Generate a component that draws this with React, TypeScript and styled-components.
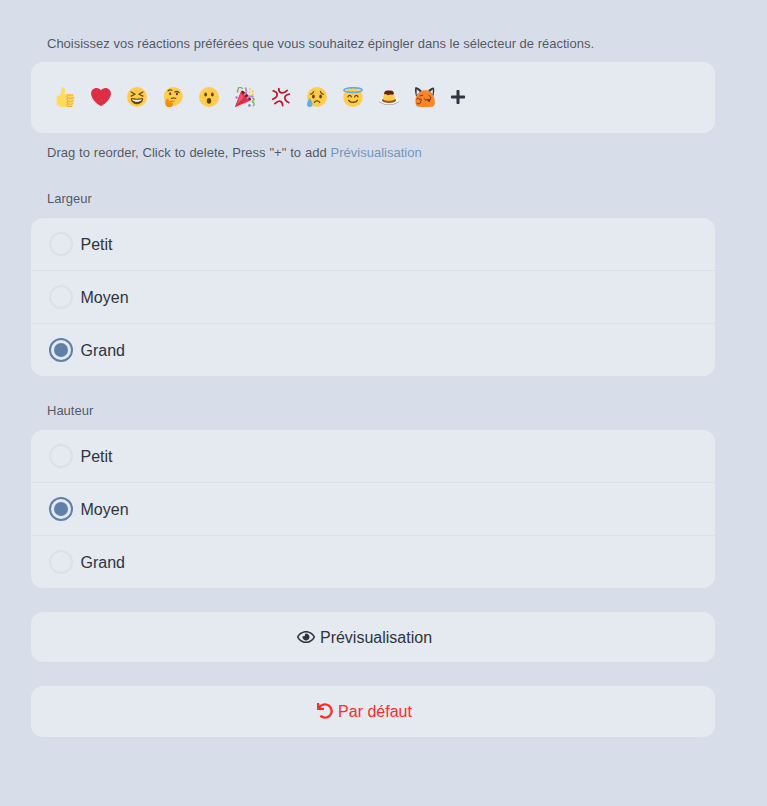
import React from "react";
import styled, { createGlobalStyle } from "styled-components";
import { FaPlus, FaRegEye, FaUndo } from "react-icons/fa";

const GlobalStyle = createGlobalStyle`
  * { box-sizing: border-box; }
  html, body { margin: 0; background: #d8dee9; }
  body {
    color: #2e3440;
    font-family: "Liberation Sans", Arial, sans-serif;
    font-size: 16px;
    line-height: 22px;
  }
`;

const Page = styled.main`
  display: flex;
  flex-direction: column;
  gap: 24px;
  width: 767px;
  min-height: 806px;
  padding: 34px 52px 0 31px;
`;

const Section = styled.section`
  display: flex;
  flex-direction: column;
`;

const Caption = styled.div`
  height: 28px;
  padding: 1px 16px 0;
  font-size: 13px;
  line-height: 18px;
  white-space: nowrap;
  color: rgba(46, 52, 64, 0.8);
`;

const Hint = styled(Caption)`
  height: 31px;
  padding-top: 11px;
  word-spacing: 0.3px;
`;

const GroupTitle = styled(Caption)`
  height: 30px;
  padding-top: 2px;
`;

const Link = styled.a`
  color: #7595bd;
  text-decoration: none;
`;

const Panel = styled.div`
  background: #e5e9f0;
  border-radius: 12px;
  overflow: hidden;
`;

const ReactionPanel = styled(Panel)`
  display: flex;
  align-items: center;
  gap: 16px;
  height: 71px;
  padding: 0 24px 1px;
`;

const Emoji = styled.svg`
  display: block;
  width: 20px;
  height: 20px;
  flex: none;
`;

const AddButton = styled.button`
  display: flex;
  margin-left: -1px;
  padding: 0;
  border: 0;
  background: none;
  color: #2e3440;
  font-size: 16px;
`;

const Option = styled.label`
  display: flex;
  align-items: center;
  gap: 7.5px;
  height: 53px;
  padding: 0 18px;
  border-bottom: 1px solid #dbe0e8;
  &:last-child {
    height: 52px;
    border-bottom: 0;
  }
`;

const Label = styled.span`
  padding-top: 2px;
`;

const Ring = styled.span<{ $on: boolean }>`
  display: grid;
  place-items: center;
  width: 24px;
  height: 24px;
  border: 2px solid ${(p) => (p.$on ? "#5e81ac" : "#dce1e6")};
  border-radius: 50%;
  &::after {
    content: "";
    width: 14px;
    height: 14px;
    border-radius: 50%;
    background: ${(p) => (p.$on ? "#5e81ac" : "transparent")};
  }
`;

const Action = styled.button<{ $danger?: boolean }>`
  display: flex;
  align-items: center;
  justify-content: center;
  gap: 5px;
  height: ${(p) => (p.$danger ? 51 : 50)}px;
  padding: 0 17px 0 0;
  border: 0;
  border-radius: 12px;
  background: #e5e9f0;
  color: ${(p) => (p.$danger ? "#ff2a2a" : "#2e3440")};
  font: inherit;
`;

const EyeIcon = styled(FaRegEye)`
  width: 18px;
  height: 16px;
`;

const UndoIcon = styled(FaUndo)`
  margin-bottom: 2px;
`;

const Face = () => <circle cx="18" cy="18" r="18" fill="#ffcc4d" />;

const ThumbsUp = () => (
  <Emoji viewBox="0 0 36 36">
    <path fill="#ffdb5e" d="M34.956 17.916c0-.503-.12-.975-.321-1.404-1.341-4.326-7.619-4.01-16.549-4.221-1.493-.035-.639-1.798-.115-5.668.341-2.517-1.282-6.382-4.01-6.382-4.498 0-.171 3.548-4.148 12.322-2.125 4.688-6.875 2.062-6.875 6.771v10.719c0 1.833.18 3.595 2.758 3.885C8.195 34.219 7.633 36 11.238 36h18.044c1.838 0 3.333-1.496 3.333-3.334 0-.762-.267-1.456-.698-2.018 1.02-.571 1.72-1.649 1.72-2.899 0-.76-.266-1.454-.696-2.015 1.023-.57 1.725-1.649 1.725-2.901 0-.909-.368-1.733-.961-2.336.757-.611 1.251-1.535 1.251-2.581z" />
    <path fill="none" stroke="#ee9547" strokeWidth="1.5" strokeLinecap="round" d="M34 19.500c-4 1.500-9 1-11 0-3-1-2-5 1-5h8M33 25c-3 1.500-8 1-10 0-2-1-2.500-4 0-5M32 30c-3 1.500-7 1-9 0-2-1-2-4 0-5M30 35c-3 .5-6 .3-8-1-1-1-1-3 1-4" />
  </Emoji>
);

const Heart = () => (
  <Emoji viewBox="0 0 36 36">
    <path fill="#dd2e44" d="M35.885 11.833c0-5.45-4.418-9.868-9.867-9.868-3.308 0-6.227 1.633-8.018 4.129-1.791-2.496-4.71-4.129-8.017-4.129-5.45 0-9.868 4.417-9.868 9.868 0 .772.098 1.52.266 2.241C1.751 22.587 11.216 31.568 18 34.034c6.783-2.466 16.249-11.447 17.617-19.959.17-.721.268-1.469.268-2.242z" />
  </Emoji>
);

const Laughing = () => (
  <Emoji viewBox="0 0 36 36">
    <Face />
    <path fill="#664500" d="M18 21c-3.623 0-6.027-.422-9-1-.679-.131-2 0-2 2 0 4 4.595 9 11 9 6.404 0 11-5 11-9 0-2-1.321-2.132-2-2-2.973.578-5.377 1-9 1z" />
    <path fill="#fff" d="M9 22s3 1 9 1 9-1 9-1-1 4.500-9 4.500S9 22 9 22z" />
    <path fill="none" stroke="#664500" strokeWidth="2.400" strokeLinecap="round" strokeLinejoin="round" d="M7.500 9l7 4-7 3.500M28.500 9l-7 4 7 3.500" />
  </Emoji>
);

const Thinking = () => (
  <Emoji viewBox="0 0 36 36">
    <circle cx="18.500" cy="17" r="17" fill="#ffcc4d" />
    <ellipse cx="13" cy="12" rx="2" ry="2.700" fill="#664500" />
    <ellipse cx="25" cy="12" rx="2" ry="2.700" fill="#664500" />
    <path fill="none" stroke="#664500" strokeWidth="2" strokeLinecap="round" d="M9 7c2-2 5-2 7-1M21 9c3-2 6-1 8 1M15 20.500c3-1 6-1 8 0" />
    <path fill="#f4900c" d="M8 21c2 0 3 2 3 4.500 3-1 6-2.500 9-1.500 2 1 1 2-1 2.500-2 .7-3 1-4 2 3 0 4 2 3 4-1 3-4 4-7 4-5 0-7-4-7-8 0-3 1-7 4-7.500z" />
  </Emoji>
);

const Surprised = () => (
  <Emoji viewBox="0 0 36 36">
    <Face />
    <ellipse cx="18" cy="25" rx="4" ry="5" fill="#664500" />
    <ellipse cx="12" cy="13.500" rx="2.500" ry="3.500" fill="#664500" />
    <ellipse cx="24" cy="13.500" rx="2.500" ry="3.500" fill="#664500" />
  </Emoji>
);

const Party = () => (
  <Emoji viewBox="0 0 36 36">
    <path fill="#dd2e44" d="M11 7C9 11 1 33 .3 34.400c-.5 1.300.2 1.800 1.300 1.300C5 34 26 26 28.400 24 30 22 16 5 11 7z" />
    <path fill="#ea596e" d="M10 11L4 31l12-12z" />
    <path fill="#a0041e" d="M12 7c3-2 18 13 17 16-2 2-16-9-17-16z" />
    <path fill="none" stroke="#77b255" strokeWidth="2.300" strokeLinecap="round" d="M5 9C2 6 7 6 6 3s6-3 7 0M31 20c4 0 4 3 2 4s-2 3 0 4 2 4 0 6" />
    <path fill="none" stroke="#aa8dd8" strokeWidth="3.300" strokeLinecap="round" d="M17 14c5-3 4-7 2-12M22 20c3-4 6-4 10-3" />
    <g fill="#ffcc4d">
      <circle cx="27" cy="4" r="2" />
      <circle cx="32" cy="8" r="2" />
      <circle cx="26" cy="10" r="2" />
      <circle cx="32" cy="13" r="1.600" />
    </g>
    <path fill="#9266cc" d="M1 17h3.500v3.500H1zM24 31h4v4h-4z" />
  </Emoji>
);

const Anger = () => (
  <Emoji viewBox="0 0 36 36">
    <g fill="none" stroke="#be1931" strokeWidth="3.200" strokeLinecap="round" strokeLinejoin="round">
      <path d="M14 3c0 4 2 7 5 7.500 4 .5 7-1 10-4.500" />
      <path d="M4 7c5 1 7 4 7 7 0 4-3 6-8 8" />
      <path d="M33 13c-5 1-8 3-8 6.500 0 4 3 7 7 8.500" />
      <path d="M7 30c3-3 6-5 9-4.500 4 1 5 4 5 8" />
    </g>
  </Emoji>
);

const Sad = () => (
  <Emoji viewBox="0 0 36 36">
    <Face />
    <ellipse cx="11.500" cy="17" rx="2.500" ry="3.500" fill="#664500" />
    <ellipse cx="24.500" cy="17" rx="2.500" ry="3.500" fill="#664500" />
    <path fill="none" stroke="#664500" strokeWidth="2" strokeLinecap="round" d="M6 13c3 0 5-2 6-5M30 13c-3 0-5-2-6-5M13 28c2-4 8-4 10 0" />
    <path fill="#5dadec" d="M5 20c2 4 5 7 5 11a5 5 0 0 1-10 0c0-4 3-7 5-11z" />
  </Emoji>
);

const Halo = () => (
  <Emoji viewBox="0 0 36 36">
    <circle cx="18" cy="18.500" r="17.500" fill="#ffcc4d" />
    <path fill="none" stroke="#664500" strokeWidth="2.100" strokeLinecap="round" d="M9 18c1-4 5-4 6 0M21 18c1-4 5-4 6 0M10 24c3 5 13 5 16 0" />
    <ellipse cx="18" cy="5.500" rx="16.500" ry="4.200" fill="none" stroke="#5dadec" strokeWidth="2.800" />
  </Emoji>
);

const Custard = () => (
  <Emoji viewBox="0 0 36 36">
    <ellipse cx="18" cy="25" rx="18" ry="7.500" fill="#99aab5" />
    <ellipse cx="18" cy="23.500" rx="18" ry="7.500" fill="#f5f8fa" />
    <ellipse cx="18" cy="24" rx="13" ry="5" fill="#a85320" />
    <path fill="#ffcc4d" d="M10 9L7 21c2 5 20 5 22 0L26 9z" />
    <path fill="#662113" d="M10 9c1-3.500 15-3.500 16 0l1 3c-3 3-5 1-8 2s-3 .5-5-.5-4 .5-5-1.500z" />
  </Emoji>
);

const Fox = () => (
  <Emoji viewBox="0 0 36 36">
    <path fill="#343a45" d="M1 0c4 0 9 4 13 9L2 17C0 11-1 4 1 0zM34 1c-4 0-8 2-11 7l10 8c2-5 2-11 1-15z" />
    <path fill="#e5e9f0" d="M3 4l6 5-6 6zM32 4l-5 5 5 4z" />
    <path fill="#fa8529" d="M9 9c3-3 7-3 11-3 5 0 9 3 12 8 3 5 5 13 3 18-1 3-4 4-8 4H9c-6 0-8-3-8-8C0 20 2 14 9 9z" />
    <path fill="#8c481d" d="M22 23l6-2-1 5c-2 2-4 1-5-3z" />
    <path fill="none" stroke="#4b2920" strokeWidth="1.400" strokeLinecap="round" strokeLinejoin="round" d="M9 16l5-1M25 15l3 3M17 21l2 3 3-2 3 2 3-2v-3M3 22c2-4 5-2 5 1 3-3 5 0 2 3 2 4-4 6-7 3" />
  </Emoji>
);

const reactions = [ThumbsUp, Heart, Laughing, Thinking, Surprised, Party, Anger, Sad, Halo, Custard, Fox];
const sizes = ["Petit", "Moyen", "Grand"];

function SizePicker({ title, selected }: { title: string; selected: string }) {
  return (
    <Section>
      <GroupTitle>{title}</GroupTitle>
      <Panel role="radiogroup" aria-label={title}>
        {sizes.map((size) => (
          <Option key={size} role="radio" aria-checked={size === selected}>
            <Ring $on={size === selected} />
            <Label>{size}</Label>
          </Option>
        ))}
      </Panel>
    </Section>
  );
}

export default function App() {
  return (
    <>
      <GlobalStyle />
      <Page>
        <Section>
          <Caption>Choisissez vos réactions préférées que vous souhaitez épingler dans le sélecteur de réactions.</Caption>
          <ReactionPanel>
            {reactions.map((Reaction, i) => (
              <Reaction key={i} />
            ))}
            <AddButton aria-label="+"><FaPlus /></AddButton>
          </ReactionPanel>
          <Hint>
            Drag to reorder, Click to delete, Press "+" to add <Link>Prévisualisation</Link>
          </Hint>
        </Section>
        <SizePicker title="Largeur" selected="Grand" />
        <SizePicker title="Hauteur" selected="Moyen" />
        <Action><EyeIcon /><Label>Prévisualisation</Label></Action>
        <Action $danger><UndoIcon />Par défaut</Action>
      </Page>
    </>
  );
}
